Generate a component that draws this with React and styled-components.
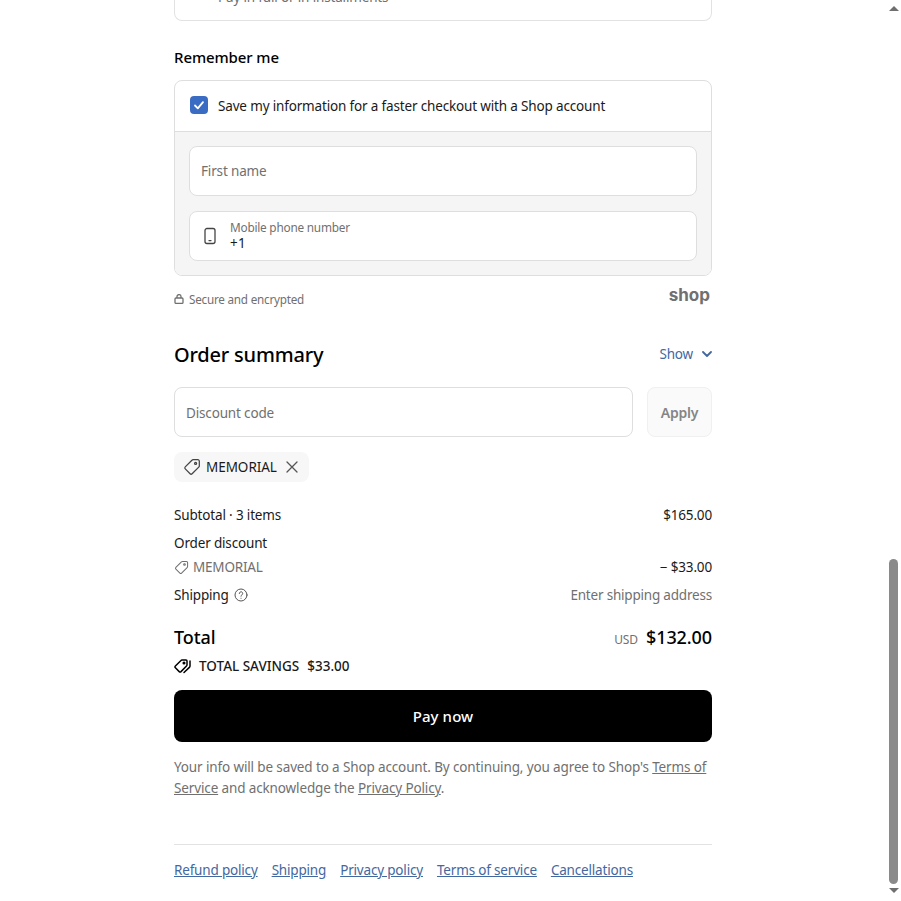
import React from 'react';
import styled, { createGlobalStyle } from 'styled-components';

const GlobalStyle = createGlobalStyle`
	html, body {
		margin: 0;
		padding: 0;
		background: #fff;
		overflow: hidden;
	}
	body {
		font-family: 'Noto Sans', 'Open Sans', Arial, sans-serif;
		font-size: 13.5px;
		letter-spacing: -0.16px;
		color: #1a1a1a;
	}
`;

const Page = styled.div`
	height: 901px;
	overflow: hidden;
	display: flex;
	flex-direction: column;
	justify-content: flex-end;
	align-items: center;
	padding-right: 15px;
	box-sizing: border-box;
`;

const Column = styled.main`
	width: 538px;
	flex-shrink: 0;
	padding-bottom: 20px;
`;

const PaymentCard = styled.div`
	height: 60px;
	border: 1px solid #e2e2e2;
	border-top: 0;
	border-radius: 0 0 8px 8px;
	padding: 0 43px;
	display: flex;
	align-items: flex-end;
	color: #707070;
	line-height: 45px;
`;

const SectionTitle = styled.h2`
	margin: 25px 0 12px;
	font-size: 15px;
	line-height: 22px;
	font-weight: 500;
	color: #000;
	letter-spacing: -0.1px;
`;

const RememberCard = styled.div`
	border: 1px solid #dedede;
	border-radius: 8px;
	overflow: hidden;
`;

const RememberRow = styled.label`
	height: 49px;
	padding: 0 15px 1px;
	display: flex;
	align-items: center;
	gap: 10px;
	border-bottom: 1px solid #dedede;
`;

const Checkbox = styled.span`
	width: 18px;
	height: 18px;
	margin-top: -2px;
	border-radius: 4px;
	background: #3a6cc4;
	display: flex;
	align-items: center;
	justify-content: center;
`;

const RememberBody = styled.div`
	background: #f5f5f5;
	padding: 14px;
	display: flex;
	flex-direction: column;
	gap: 15px;
`;

const Field = styled.div`
	height: 50px;
	flex: ${p => (p.$grow ? 1 : 'none')};
	box-sizing: border-box;
	background: #fff;
	border: 1px solid #dedede;
	border-radius: 8px;
	padding: ${p => (p.$grow ? '2px' : '0')} 11px 0;
	display: flex;
	align-items: center;
	gap: 11px;
	color: #707070;
`;

const FloatLabel = styled.div`
	display: flex;
	flex-direction: column;
	margin-top: -1px;
	font-size: 11.8px;
	line-height: 16px;
	letter-spacing: -0.22px;
	color: #707070;
`;

const FloatValue = styled.span`
	font-size: 13.5px;
	line-height: 17px;
	letter-spacing: 0.3px;
	color: #1a1a1a;
`;

const SecureRow = styled.div`
	display: flex;
	justify-content: space-between;
	align-items: flex-start;
	height: 47px;
	padding-top: 9px;
	box-sizing: border-box;
`;

const Secure = styled.span`
	display: flex;
	align-items: center;
	gap: 5px;
	margin-top: 4px;
	font-size: 11.7px;
	line-height: 20px;
	letter-spacing: -0.22px;
	color: #707070;
`;

const ShopLogo = styled.span`
	font-family: Inter, 'Noto Sans', sans-serif;
	font-size: 17px;
	line-height: 20px;
	font-weight: 700;
	color: #707070;
	letter-spacing: 0;
	padding-right: 2px;
`;

const SummaryHeader = styled.div`
	display: flex;
	justify-content: space-between;
	align-items: center;
	margin-top: 16px;
	height: 32px;
`;

const SummaryTitle = styled.h2`
	margin: 0;
	padding-bottom: 2px;
	font-size: 20px;
	font-weight: 500;
	color: #000;
	letter-spacing: -0.2px;
`;

const Toggle = styled.span`
	display: flex;
	align-items: center;
	gap: 9px;
	padding-bottom: 3px;
	color: #42689f;
`;

const DiscountRow = styled.div`
	display: flex;
	gap: 14px;
	margin-top: 16px;
`;

const ApplyButton = styled.button`
	width: 65px;
	height: 50px;
	padding: 0;
	border: 1px solid #f0f0f0;
	border-radius: 8px;
	background: #fafafa;
	color: #858585;
	font: 600 14px 'Noto Sans', sans-serif;
	letter-spacing: -0.2px;
`;

const Chip = styled.div`
	display: inline-flex;
	align-items: center;
	height: 30px;
	margin-top: 15px;
	padding: 0 9px;
	gap: 5px;
	border-radius: 8px;
	background: #f7f7f7;
	letter-spacing: -0.04px;
`;

const Rows = styled.div`
	margin-top: 19px;
	display: flex;
	flex-direction: column;
`;

const Row = styled.div`
	display: flex;
	justify-content: space-between;
	align-items: center;
	height: ${p => p.$height || 28}px;
	margin-bottom: ${p => p.$after || 0}px;
	line-height: 20px;
`;

const RowLabel = styled.span`
	display: flex;
	align-items: center;
	gap: ${p => p.$gap || 4}px;
	color: ${p => (p.$muted ? '#707070' : 'inherit')};
	letter-spacing: ${p => (p.$muted ? '-0.2px' : 'inherit')};
`;

const TotalRow = styled.div`
	display: flex;
	justify-content: space-between;
	align-items: center;
	height: 30px;
	margin-top: 13px;
	font-size: 18px;
	font-weight: 500;
	color: #000;
	letter-spacing: -0.1px;
`;

const Amount = styled.span`
	display: flex;
	align-items: baseline;
	gap: 8px;
`;

const Currency = styled.span`
	font-size: 12px;
	font-weight: 400;
	color: #707070;
`;

const Savings = styled.div`
	display: flex;
	align-items: center;
	height: 28px;
	gap: 6px;
	font-weight: 500;
	font-size: 13.5px;
	letter-spacing: 0;
	color: #1a1a1a;
`;

const SavingsAmount = styled.span`
	margin-left: 2px;
`;

const PayButton = styled.button`
	display: block;
	width: 100%;
	height: 52px;
	margin-top: 10px;
	border: 0;
	border-radius: 8px;
	background: #000;
	color: #fff;
	font: 500 15px 'Noto Sans', sans-serif;
	letter-spacing: 0.1px;
`;

const Legal = styled.p`
	margin: 15px 0 0;
	line-height: 21px;
	color: #707070;
	letter-spacing: -0.13px;
`;

const LegalLink = styled.a`
	color: #707070;
	text-decoration: underline;
`;

const Footer = styled.nav`
	margin-top: 45px;
	padding-top: 14px;
	border-top: 1px solid #e2e2e2;
	display: flex;
	gap: 14px;
	line-height: 22px;
	letter-spacing: -0.18px;
`;

const FooterLink = styled.a`
	color: #42689f;
	text-decoration: underline;
`;

const Scrollbar = styled.div`
	position: fixed;
	top: 0;
	right: 0;
	bottom: 0;
	width: 15px;
	background: #fff;
`;

const ScrollThumb = styled.div`
	position: absolute;
	left: 3px;
	top: 559px;
	width: 9px;
	height: 325px;
	border-radius: 5px;
	background: #8a8a8a;
`;

const ScrollArrow = styled.div`
	position: absolute;
	left: 3px;
	width: 0;
	height: 0;
	border-left: 5px solid transparent;
	border-right: 5px solid transparent;
	${p => (p.$down
		? 'bottom: 8px; border-top: 5px solid #6f6f6f;'
		: 'top: 6px; border-bottom: 5px solid #6f6f6f;')}
`;

const Tag = ({ size = 16, color = '#444' }) => (
	<svg width={size} height={size} viewBox="0 0 16 16" fill="none" stroke={color} strokeWidth="1.1" strokeLinejoin="round">
		<path d="M9 1.5h4.2a1.3 1.3 0 0 1 1.3 1.3V7a1.6 1.6 0 0 1-.5 1.1l-5.9 5.9a1.3 1.3 0 0 1-1.8 0L2 9.7a1.3 1.3 0 0 1 0-1.8L7.9 2A1.6 1.6 0 0 1 9 1.5z" />
		<circle cx="11.2" cy="4.8" r="0.9" />
	</svg>
);

const Tags = () => (
	<svg width="19" height="16" viewBox="0 0 19 16" fill="none" stroke="#000" strokeWidth="1.5" strokeLinejoin="round" strokeLinecap="round">
		<path d="M8 2h4a1 1 0 0 1 1 1v4a1.5 1.5 0 0 1-.5 1L7 13.6a1.3 1.3 0 0 1-1.8 0L1.4 9.8a1.3 1.3 0 0 1 0-1.8L7 2.5A1.5 1.5 0 0 1 8 2z" />
		<path d="M16 3v5a2 2 0 0 1-.6 1.4L10 14.5" />
		<circle cx="10" cy="5" r="0.8" />
	</svg>
);

export default function App() {
	return (
		<Page>
			<GlobalStyle />
			<Column>
				<PaymentCard>Pay in full or in installments</PaymentCard>

				<SectionTitle>Remember me</SectionTitle>
				<RememberCard>
					<RememberRow>
						<Checkbox>
							<svg width="12" height="12" viewBox="0 0 12 12" fill="none" stroke="#fff" strokeWidth="1.8" strokeLinecap="round" strokeLinejoin="round">
								<path d="M2 6.5l2.8 2.8L10 3.2" />
							</svg>
						</Checkbox>
						Save my information for a faster checkout with a Shop account
					</RememberRow>
					<RememberBody>
						<Field>First name</Field>
						<Field>
							<svg width="18" height="18" viewBox="0 0 18 18" fill="none" stroke="#444" strokeWidth="1.3" strokeLinecap="round">
								<rect x="4" y="1.5" width="10" height="15" rx="2" />
								<path d="M8 13.6h2" />
							</svg>
							<FloatLabel>
								Mobile phone number
								<FloatValue>+1</FloatValue>
							</FloatLabel>
						</Field>
					</RememberBody>
				</RememberCard>
				<SecureRow>
					<Secure>
						<svg width="10" height="10" viewBox="0 0 10 10" fill="none" stroke="#707070" strokeWidth="1.3">
							<rect x="1" y="4" width="8" height="5.4" rx="1" />
							<path d="M3 4V2.6a2 2 0 0 1 4 0V4" />
						</svg>
						Secure and encrypted
					</Secure>
					<ShopLogo>shop</ShopLogo>
				</SecureRow>

				<SummaryHeader>
					<SummaryTitle>Order summary</SummaryTitle>
					<Toggle>
						Show
						<svg width="10" height="10" viewBox="0 0 10 10" fill="none" stroke="#42689f" strokeWidth="1.8" strokeLinecap="round" strokeLinejoin="round">
							<path d="M1 3l4 4 4-4" />
						</svg>
					</Toggle>
				</SummaryHeader>
				<DiscountRow>
					<Field $grow>Discount code</Field>
					<ApplyButton>Apply</ApplyButton>
				</DiscountRow>
				<Chip>
					<Tag size={18} />
					MEMORIAL
					<svg width="18" height="18" viewBox="0 0 18 18" fill="none" stroke="#555" strokeWidth="1.3" strokeLinecap="round">
						<path d="M5 4l10 10M15 4L5 14" />
					</svg>
				</Chip>

				<Rows>
					<Row>
						<span>Subtotal · 3 items</span>
						<span>$165.00</span>
					</Row>
					<Row>Order discount</Row>
					<Row $height={20} $after={4}>
						<RowLabel $muted>
							<Tag size={15} color="#707070" />
							MEMORIAL
						</RowLabel>
						<span>− $33.00</span>
					</Row>
					<Row>
						<RowLabel $gap={5}>
							Shipping
							<svg width="14" height="14" viewBox="0 0 14 14" fill="none" stroke="#555" strokeWidth="1" strokeLinecap="round">
								<circle cx="7" cy="7" r="6" />
								<path d="M5.3 5.5a1.7 1.7 0 1 1 2.6 1.4c-.6.4-.9.7-.9 1.3M7 10.2v.1" />
							</svg>
						</RowLabel>
						<RowLabel $muted>Enter shipping address</RowLabel>
					</Row>
				</Rows>

				<TotalRow>
					Total
					<Amount>
						<Currency>USD</Currency>
						$132.00
					</Amount>
				</TotalRow>
				<Savings>
					<Tags />
					TOTAL SAVINGS
					<SavingsAmount>$33.00</SavingsAmount>
				</Savings>

				<PayButton>Pay now</PayButton>

				<Legal>
					Your info will be saved to a Shop account. By continuing, you agree to Shop's <LegalLink>Terms of Service</LegalLink> and acknowledge the <LegalLink>Privacy Policy</LegalLink>.
				</Legal>

				<Footer>
					<FooterLink>Refund policy</FooterLink>
					<FooterLink>Shipping</FooterLink>
					<FooterLink>Privacy policy</FooterLink>
					<FooterLink>Terms of service</FooterLink>
					<FooterLink>Cancellations</FooterLink>
				</Footer>
			</Column>
			<Scrollbar>
				<ScrollArrow />
				<ScrollThumb />
				<ScrollArrow $down />
			</Scrollbar>
		</Page>
	);
}
